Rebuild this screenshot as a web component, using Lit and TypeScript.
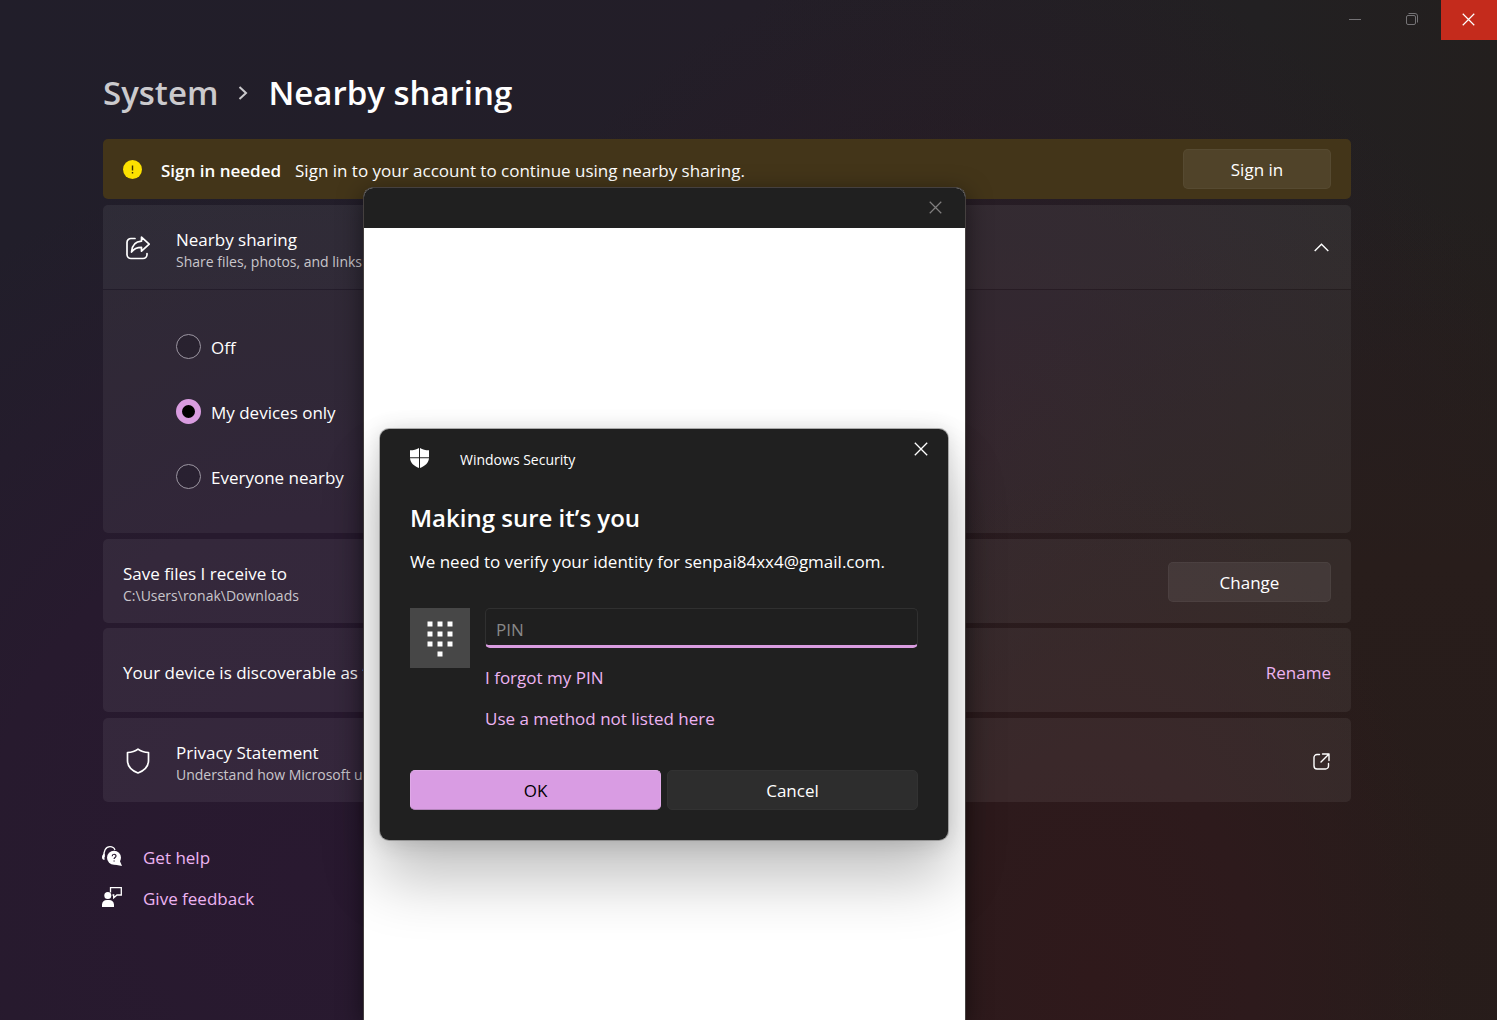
import { LitElement, html, css, svg } from "lit";
import { customElement, state } from "lit/decorators.js";

const closeIcon = (size: number) => html`<svg class="icon" width=${size} height=${size} viewBox="0 0 14 14" fill="none" stroke="currentColor" stroke-width="1.3">
  <path d="M.8.8 13.2 13.2M13.2.8.8 13.2" />
</svg>`;

const dots = [
  [0, 0], [10, 0], [20, 0],
  [0, 10], [10, 10], [20, 10],
  [0, 20], [10, 20], [20, 20],
  [10, 30],
];

@customElement("app-root")
export class AppRoot extends LitElement {
  @state() private mode = "mine";

  static styles = css`
    :host {
      display: block;
      font-family: "Segoe UI", "Open Sans", "Noto Sans", sans-serif;
      font-size: 17px;
      line-height: 24px;
      color: #fff;
    }
    *, *::before, *::after { box-sizing: border-box; }
    button, input { font: inherit; color: inherit; margin: 0; }
    button { border: 0; background: none; padding: 0; cursor: default; }
    a { color: #edb4f2; text-decoration: none; }
    h1, h2, p { margin: 0; }
    .icon { display: block; flex: none; }

    .window {
      position: relative;
      min-height: 100vh;
      overflow: hidden;
      background:
        radial-gradient(ellipse 24% 50% at 73% 96%, #2f191b 0%, #2d1a1c 45%, transparent 100%),
        radial-gradient(ellipse 50% 70% at 95% 90%, #271c1a 0%, #281d1b 50%, transparent 100%),
        radial-gradient(ellipse 42% 70% at 20% 86%, #291930 0%, #271a2e 50%, transparent 100%),
        radial-gradient(ellipse 35% 50% at 66% 45%, #2a1a24 0%, transparent 100%),
        linear-gradient(90deg, #211e2a 0%, #231e28 50%, #222022 84%, #231f1e 100%);
    }
    .caption { display: flex; justify-content: flex-end; height: 40px; }
    .caption button {
      width: 57px;
      display: grid;
      place-items: center;
      padding: 0 2px 2px 0;
      color: #757376;
    }
    .caption .exit { width: 56px; background: #c42b1c; color: #fff; }

    .page { padding: 28px 146px 0 103px; }
    .crumbs {
      display: flex;
      align-items: center;
      font-size: 33px;
      line-height: 50px;
      font-weight: 600;
      gap: 20px;
      margin-bottom: 21px;
    }
    .crumbs a { color: #cbcacd; }
    .crumbs h1 { font: inherit; }

    .banner {
      display: flex;
      align-items: center;
      height: 60px;
      padding: 0 20px;
      background: #433519;
      border-radius: 5px;
      margin-bottom: 6px;
    }
    .banner strong { font-weight: 600; margin: 0 14px 0 19px; padding-top: 3px; }
    .banner p { flex: 1; padding-top: 3px; }
    .btn {
      height: 40px;
      padding-top: 2px;
      border: 1px solid rgba(255, 255, 255, .04);
      border-radius: 5px;
      background: rgba(255, 255, 255, .07);
    }
    .signin { width: 148px; }
    .change { width: 163px; }

    .card {
      display: flex;
      align-items: center;
      height: 84px;
      padding: 2px 20px 0;
      background: rgba(255, 255, 255, .063);
      border-radius: 5px;
      margin-bottom: 6px;
      white-space: nowrap;
    }
    .card.tight { margin-bottom: 5px; }
    .card .text { flex: 1; min-width: 0; }
    .card .text, .rename { padding-top: 3px; }
    .card .lead { width: 30px; margin-right: 23px; display: grid; place-items: center; }
    .card small { display: block; font-size: 14px; line-height: 20px; color: #c9c6cb; }
    .card .tail { width: 20px; display: grid; place-items: center; }
    .card.expander { border-radius: 5px 5px 0 0; margin-bottom: 1px; }
    .expander .tail { padding-bottom: 2px; }
    .options {
      border: 0;
      margin: 0 0 6px;
      padding: 24px 73px;
      background: rgba(255, 255, 255, .055);
      border-radius: 0 0 5px 5px;
      height: 243px;
    }
    .option { display: flex; align-items: center; height: 65px; }
    .option span { padding-top: 2px; }
    .option input {
      appearance: none;
      width: 25px;
      height: 25px;
      margin: 0 10px 0 0;
      border-radius: 50%;
      border: 1px solid #9c96a2;
      background: rgba(20, 14, 26, .25);
    }
    .option input:checked { border: 6px solid #d99ce0; background: #000; }

    .links { display: grid; gap: 17px; padding-top: 38px; margin-left: -1px; justify-items: start; }
    .links a { display: flex; align-items: flex-start; gap: 21px; }
    .links .icon { color: #fff; }

    .host {
      position: absolute;
      left: 363px;
      top: 187px;
      width: 603px;
      bottom: 0;
      border: 1px solid #45403f;
      border-bottom: 0;
      border-radius: 10px 10px 0 0;
      background: #fff;
      box-shadow: 0 6px 24px rgba(0, 0, 0, .5);
    }
    .host header {
      display: flex;
      justify-content: flex-end;
      align-items: center;
      height: 40px;
      padding: 0 23px 2px 0;
      border-radius: 9px 9px 0 0;
      background: #202020;
      color: #807f7f;
    }
    .dialog {
      position: absolute;
      left: 380px;
      top: 429px;
      width: 568px;
      padding: 13px 30px 30px;
      border-radius: 9px;
      background: #202020;
      box-shadow: 0 0 0 1px rgba(90, 90, 90, .45), 0 40px 60px rgba(0, 0, 0, .24), 0 2px 22px rgba(0, 0, 0, .16);
    }
    .brand { display: flex; height: 36px; }
    .brand .shield { margin-top: 6px; }
    .brand span { flex: 1; font-size: 14px; line-height: 36px; padding-left: 31px; }
    .brand button { width: 15px; height: 15px; margin-right: -10px; display: grid; justify-items: end; }
    .dialog h2 { font-size: 24px; line-height: 32px; font-weight: 600; margin: 24px 0 16px; }
    .dialog form { display: grid; grid-template-columns: 60px 1fr; column-gap: 15px; margin-top: 34px; }
    .pad { width: 60px; height: 60px; background: #474747; }
    .fields { display: grid; justify-items: start; }
    .pin {
      width: 100%;
      height: 40px;
      padding: 4px 10px 0;
      margin-bottom: 1px;
      border: 1px solid #303030;
      border-bottom: 3px solid #d99ce0;
      border-radius: 5px;
      background: #1f1f1f;
      outline: 0;
    }
    .pin::placeholder { color: #888; opacity: 1; }
    .fields a { margin-top: 17px; }
    .actions { grid-column: 1 / -1; display: grid; grid-template-columns: 1fr 1fr; gap: 6px; margin-top: 39px; }
    .actions .ok { background: #d99ce3; border-color: #dfa9e7; border-bottom-color: #b283ba; color: #000; }
    .actions .cancel { background: #2d2d2d; border-color: #323232; }
  `;

  private option(value: string, label: string) {
    return html`<label class="option">
      <input type="radio" name="mode" .checked=${this.mode === value} @change=${() => (this.mode = value)} />
      <span>${label}</span>
    </label>`;
  }

  render() {
    return html`
      <div class="window">
        <div class="caption">
          <button aria-label="Minimize"><svg class="icon" width="12" height="12" viewBox="0 0 12 12" stroke="currentColor"><path d="M0 6.5h12" /></svg></button>
          <button aria-label="Restore"><svg class="icon" width="12" height="12" viewBox="0 0 12 12" fill="none" stroke="currentColor"><rect x=".5" y="2.5" width="9" height="9" rx="1.5" /><path d="M2.5.5H9A2.5 2.5 0 0 1 11.5 3v6.5" /></svg></button>
          <button class="exit" aria-label="Close">${closeIcon(13)}</button>
        </div>
        <main class="page">
          <nav class="crumbs">
            <a href="#system">System</a>
            <svg class="icon" width="10" height="14" viewBox="0 0 10 14" fill="none" stroke="#cbcacd" stroke-width="2"><path d="m1.500 1 6.500 6-6.500 6" /></svg>
            <h1>Nearby sharing</h1>
          </nav>
          <section class="banner">
            <svg class="icon" width="19" height="19" viewBox="0 0 19 19"><circle cx="9.5" cy="9.5" r="9.5" fill="#fce100" /><path d="M9.5 5.5v5M9.5 12v1.6" stroke="#3a3000" stroke-width="1.4" /></svg>
            <strong>Sign in needed</strong>
            <p>Sign in to your account to continue using nearby sharing.</p>
            <button class="btn signin">Sign in</button>
          </section>
          <section class="card expander">
            <div class="lead"><svg class="icon" width="24" height="24" viewBox="0 0 24 24" fill="none" stroke="currentColor" stroke-width="1.7" stroke-linejoin="round" stroke-linecap="round">
              <path d="M9 2.500H5a4 4 0 0 0-4 4v12a4 4 0 0 0 4 4h12a4 4 0 0 0 4-4v-1" />
              <path d="M15.500 1.200 23.200 8.200 15.500 15.200V11.300C11 11.300 8 12.500 5.500 16 6 9.500 9.500 5.500 15.500 5.200Z" />
            </svg></div>
            <div class="text">Nearby sharing<small>Share files, photos, and links with nearby Windows devices</small></div>
            <button class="tail" aria-label="Collapse"><svg class="icon" width="15" height="9" viewBox="0 0 15 9" fill="none" stroke="currentColor" stroke-width="1.4"><path d="m.7 8 6.800-6.800L14.300 8" /></svg></button>
          </section>
          <fieldset class="options" aria-label="Nearby sharing">
            ${this.option("off", "Off")}
            ${this.option("mine", "My devices only")}
            ${this.option("all", "Everyone nearby")}
          </fieldset>
          <section class="card tight">
            <div class="text">Save files I receive to<small>C:\\Users\\ronak\\Downloads</small></div>
            <button class="btn change">Change</button>
          </section>
          <section class="card">
            <div class="text">Your device is discoverable as “A”</div>
            <a class="rename" href="#rename">Rename</a>
          </section>
          <section class="card">
            <div class="lead"><svg class="icon" width="24" height="26" viewBox="0 0 24 26" fill="none" stroke="currentColor" stroke-width="1.7" stroke-linejoin="round">
              <path d="M12 1.200C9.500 3.200 5.500 4.500 1.500 4.500V12.500C1.500 18.500 5.500 22.500 12 25 18.500 22.500 22.500 18.500 22.500 12.500V4.500C18.500 4.500 14.500 3.200 12 1.200Z" />
            </svg></div>
            <div class="text">Privacy Statement<small>Understand how Microsoft uses your data</small></div>
            <a class="tail" href="#privacy" aria-label="Privacy Statement"><svg class="icon" width="17" height="17" viewBox="0 0 17 17" fill="none" stroke="#fff" stroke-width="1.400" stroke-linecap="round" stroke-linejoin="round"><path d="M6.500 1.500H4A3 3 0 0 0 1 4.500V13a3 3 0 0 0 3 3h8.500a3 3 0 0 0 3-3v-2.500M9.500 1H16v6.500M16 1 8 9" /></svg></a>
          </section>
          <div class="links">
            <a href="#help"><svg class="icon" width="20" height="20" viewBox="0 0 20 20">
              <path d="M2.200 11C1 5 4 .7 8 .7c2.500 0 4.200 1.200 5 3.300" fill="none" stroke="currentColor" stroke-width="1.300" />
              <path d="M0 11.500c0-2 .8-3.500 2.500-4v6.500C1 14 0 13 0 11.500Z" fill="currentColor" />
              <circle cx="12" cy="11.800" r="7" fill="currentColor" /><path d="m17.500 14 2.500 6-8-1.500Z" fill="currentColor" />
              <path d="M10.200 10.200c0-2.600 3.800-2.500 3.800-.2 0 1.500-1.900 1.600-1.900 3.100M12.100 14.400v1.200" fill="none" stroke="#291b30" stroke-width="1.200" />
            </svg>Get help</a>
            <a href="#feedback"><svg class="icon" width="20" height="20" viewBox="0 0 20 20">
              <circle cx="5.800" cy="8.500" r="3.500" fill="currentColor" />
              <path d="M0 20v-2.500A5 5 0 0 1 5 13h2a5 5 0 0 1 5 4.500V20Z" fill="currentColor" />
              <path d="M8.500 5.500V.700H19.300V8H15l-3.300 2.800V8H10.500" fill="none" stroke="currentColor" stroke-width="1.300" />
            </svg>Give feedback</a>
          </div>
        </main>
        <div class="host">
          <header><button aria-label="Close">${closeIcon(13)}</button></header>
        </div>
        <section class="dialog" role="dialog" aria-label="Windows Security">
          <div class="brand">
            <svg class="icon shield" width="19" height="20" viewBox="0 0 19 20" fill="currentColor">
              <path d="M9 0C6.500 1.500 3.500 2.300 0 2.300V9.200H9ZM10 0c2.500 1.500 5.500 2.300 9 2.300V9.200H10ZM0 10.200H9V20C4 18 .5 15 0 10.200ZM19 10.200H10V20c5-2 8.500-5 9-9.800Z" />
            </svg>
            <span>Windows Security</span>
            <button aria-label="Close">${closeIcon(14)}</button>
          </div>
          <h2>Making sure it’s you</h2>
          <p>We need to verify your identity for senpai84xx4@gmail.com.</p>
          <form @submit=${(e: Event) => e.preventDefault()}>
            <svg class="pad" viewBox="0 0 60 60">${dots.map(([x, y]) => svg`<rect x=${17.5 + x} y=${13.5 + y} width="5" height="5" fill="#fff" />`)}</svg>
            <div class="fields">
              <input class="pin" type="password" placeholder="PIN" aria-label="PIN" />
              <a href="#forgot">I forgot my PIN</a>
              <a href="#method">Use a method not listed here</a>
            </div>
            <div class="actions">
              <button class="btn ok">OK</button>
              <button class="btn cancel" type="button">Cancel</button>
            </div>
          </form>
        </section>
      </div>
    `;
  }
}
